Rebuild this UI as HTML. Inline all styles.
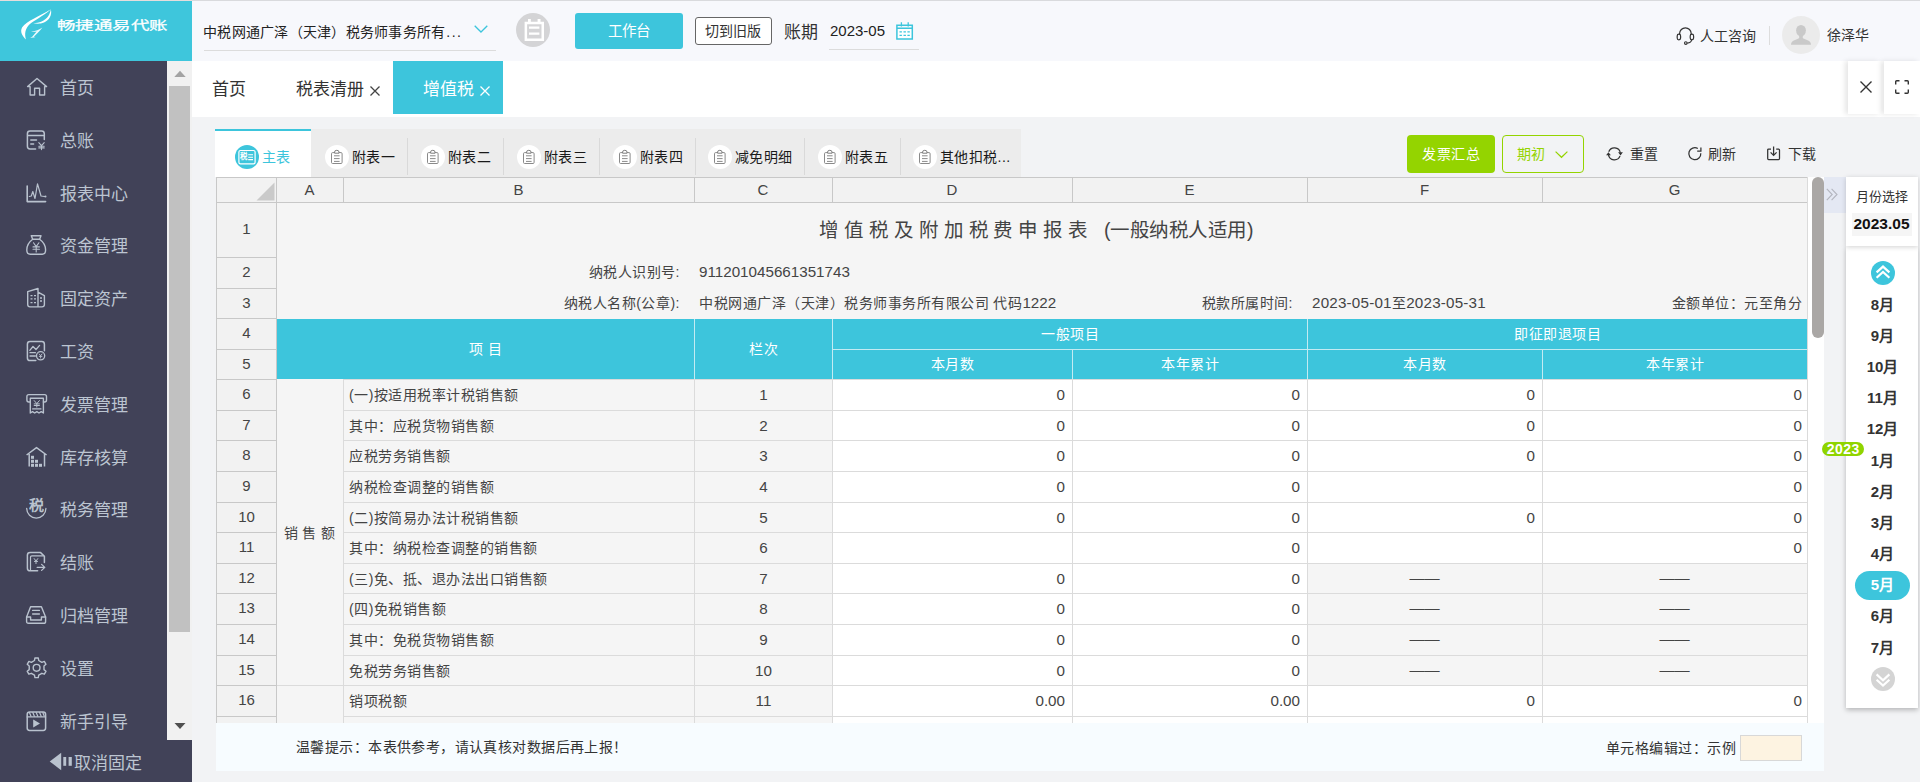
<!DOCTYPE html>
<html lang="zh-CN">
<head>
<meta charset="utf-8">
<title>畅捷通易代账</title>
<style>
*{box-sizing:border-box;margin:0;padding:0}
html,body{width:1920px;height:782px;overflow:hidden}
body{font-family:"Liberation Sans",sans-serif;background:#f2f3f5;color:#333;position:relative;font-size:14px}
.abs{position:absolute}
.t{position:absolute;white-space:nowrap;line-height:20px;height:20px}
svg{position:absolute;overflow:visible}
#hdr{left:0;top:0;width:1920px;height:61px;background:#f7f8fc;border-top:1px solid #d9dadd}
#logo{left:0;top:0;width:192px;height:61px;background:#3ec6dc;border-top:1px solid #e6dddc}
#side{left:0;top:61px;width:167px;height:721px;background:#414258}
#sscroll{left:167px;top:61px;width:25px;height:679px;background:#f1f1f1}
#sthumb{left:169px;top:86px;width:21px;height:546px;background:#c1c1c1}
#sfoot{left:0;top:740px;width:192px;height:42px;background:#414258}
.mi{position:absolute;left:60px;color:#bcc5d1;font-size:17px;line-height:20px;height:20px;white-space:nowrap}
#tabbar{left:192px;top:61px;width:1728px;height:56px;background:#fff}
#tabact{left:393px;top:61px;width:110px;height:53px;background:#3dc5dc}
.ci{top:145px;width:24px;height:24px;border-radius:12px;background:#fff}
.st{top:147px;font-size:14px;letter-spacing:0.4px;color:#1a1a1a}
#grid .c{font-size:14px;letter-spacing:0.5px;color:#444}
#grid .n{font-size:15.2px;letter-spacing:0}
#grid .h{font-size:15px;color:#444;text-align:center}
#grid .r{text-align:right}
#grid .m{text-align:center}
#grid .w{color:#fff}
#grid .s{font-size:14px;letter-spacing:0;word-spacing:0.8px}
#grid .d{letter-spacing:0;margin-top:-1px;transform:scaleX(1.08)}
#grid .ttl{font-size:19.5px;color:#444;line-height:24px;height:24px;word-spacing:-0.5px}
.mo{left:1846px;width:73px;text-align:center;font-size:15px;font-weight:bold;color:#333}
</style>
</head>
<body>
<div id="hdr" class="abs"></div>
<div id="logo" class="abs"></div>
<div class="t" style="left:57px;top:16px;font-size:12px;color:#fff;-webkit-text-stroke:0.25px #fff;transform:scaleX(1.54);transform-origin:0 50%">畅捷通易代账</div>
<div class="t" style="left:203px;top:22px;font-size:14px;letter-spacing:0.25px;color:#222">中税网通广泽（天津）税务师事务所有<span style="letter-spacing:1.5px;margin-left:1px">...</span></div>
<div class="abs" style="left:204px;top:50px;width:292px;height:1px;background:#dcdcdc"></div>
<svg style="left:474px;top:25px" width="14" height="8" viewBox="0 0 14 8"><path d="M0.7 0.7 L7 7 L13.3 0.7" fill="none" stroke="#3dc5dc" stroke-width="1.3"/></svg>
<div class="abs" style="left:516px;top:13px;width:34px;height:34px;border-radius:17px;background:#d4d4d6"></div>
<div class="abs" style="left:575px;top:13px;width:108px;height:36px;border-radius:3px;background:#3dc5dc"></div>
<div class="t" style="left:575px;top:21px;width:108px;text-align:center;font-size:14.5px;color:#fff">工作台</div>
<div class="abs" style="left:695px;top:17px;width:77px;height:28px;border-radius:3px;background:#fff;border:1px solid #666"></div>
<div class="t" style="left:694px;top:21px;width:77px;text-align:center;font-size:14px;color:#333">切到旧版</div>
<div class="t" style="left:784px;top:23px;font-size:17px;color:#333">账期</div>
<div class="t" style="left:830px;top:21px;font-size:15px;color:#222">2023-05</div>
<div class="abs" style="left:829px;top:49px;width:90px;height:1px;background:#dcdcdc"></div>
<div class="t" style="left:1700px;top:26px;font-size:14px;color:#333">人工咨询</div>
<div class="abs" style="left:1769px;top:26px;width:1px;height:19px;background:#ddd"></div>
<div class="abs" style="left:1782px;top:16px;width:38px;height:38px;border-radius:19px;background:#ebebeb"></div>
<div class="t" style="left:1827px;top:25px;font-size:14px;color:#333">徐泽华</div>
<svg style="left:0;top:0" width="60" height="60" viewBox="0 0 60 60">
<path d="M26 39.6 C22.4 36 19.6 31.6 22.2 27.2 C26.6 21 40 16 50.9 9.2 C42.5 16.8 33.6 20.4 29.4 24.4 C25.4 28.4 24.2 33.2 26 39.6 Z" fill="#fff"/>
<path d="M50.9 9.2 C52.2 15 49.2 20.2 44 22.6 C40 24.2 36 23.8 33.2 23.2 C39 22.8 45 20.8 48 16.4 C49.7 14 50.5 11.5 50.9 9.2 Z" fill="#fff"/>
<path d="M42.4 27.6 C39 29.8 36.2 31.4 31 31.6 C33.6 32 35 31.9 36.6 31.6 L32.2 36.8 L30.2 37.7 C32.4 37.8 34.2 37.6 35.6 37 L33.8 36.8 C37 34 39.8 31 42.4 27.6 Z" fill="#fff" opacity="0.92"/>
</svg>
<svg style="left:516px;top:13px" width="34" height="34" viewBox="0 0 34 34"><path d="M8.6 8.8 H12 V6 H14.8 V8.8 H21.6 V6 H24.5 V8.8 H28 V27.9 H8.6 Z M11.1 11.3 V25.4 H25.5 V11.3 Z M13 13.6 H23.4 V15.8 H13 Z M13 19.5 H23.4 V21.7 H13 Z" fill="#fff" fill-rule="evenodd"/></svg>
<svg style="left:896px;top:22px" width="18" height="18" viewBox="0 0 18 18"><rect x="0.9" y="6.4" width="15.4" height="10.4" fill="#fff"/><path d="M0.9 3.2 H16.3 V16.9 H0.9 Z M0.9 6.2 H16.3" fill="none" stroke="#3dc5dc" stroke-width="1.5"/><path d="M5.4 0.2 V4.6 M12.2 0.2 V4.6" stroke="#3dc5dc" stroke-width="1.3" fill="none"/><path d="M3.5 9.8 H5.9 M7.5 9.8 H9.9 M11.4 9.8 H13.8 M3.5 13.4 H5.9 M7.5 13.4 H9.9 M11.4 13.4 H13.8" stroke="#3dc5dc" stroke-width="1.3" fill="none"/></svg>
<svg style="left:1676px;top:26px" width="19" height="20" viewBox="0 0 19 20"><path d="M3.6 8.4 V7.6 A5.8 5.8 0 0 1 15.2 7.6 V8.4" fill="none" stroke="#333" stroke-width="1.2"/><rect x="1.2" y="8.2" width="3.4" height="5.6" rx="1.7" fill="none" stroke="#333" stroke-width="1.2"/><rect x="14.2" y="8.2" width="3.4" height="5.6" rx="1.7" fill="none" stroke="#333" stroke-width="1.2"/><path d="M15.6 13.8 C15.4 16 13.6 17 11.2 17.1" fill="none" stroke="#333" stroke-width="1.2"/><circle cx="9.8" cy="17.1" r="1.3" fill="none" stroke="#333" stroke-width="1.1"/></svg>
<svg style="left:1782px;top:16px" width="38" height="38" viewBox="0 0 38 38"><ellipse cx="19" cy="14.6" rx="4.9" ry="5.7" fill="#c9c9c9"/><path d="M9 28.8 C9 26 10.5 25 13 24 L16.6 22.4 C17.4 22 17.4 21 17 20 H21 C20.6 21 20.6 22 21.4 22.4 L25 24 C27.5 25 29 26 29 28.8 Z" fill="#c9c9c9"/></svg>
<div id="side" class="abs"></div>
<div id="sscroll" class="abs"></div>
<div id="sthumb" class="abs"></div>
<svg style="left:173.5px;top:70px" width="12" height="8" viewBox="0 0 12 8"><path d="M6 0.8 L11.7 7 L0.3 7 Z" fill="#a3a3a3"/></svg>
<svg style="left:174px;top:722px" width="12" height="8" viewBox="0 0 12 8"><path d="M0.5 1 L11.5 1 L6 7 Z" fill="#505050"/></svg>
<div id="sfoot" class="abs"></div>
<div class="mi" style="top:79px">首页</div>
<div class="mi" style="top:132px">总账</div>
<div class="mi" style="top:185px">报表中心</div>
<div class="mi" style="top:237px">资金管理</div>
<div class="mi" style="top:290px">固定资产</div>
<div class="mi" style="top:343px">工资</div>
<div class="mi" style="top:396px">发票管理</div>
<div class="mi" style="top:449px">库存核算</div>
<div class="mi" style="top:501px">税务管理</div>
<div class="mi" style="top:554px">结账</div>
<div class="mi" style="top:607px">归档管理</div>
<div class="mi" style="top:660px">设置</div>
<div class="mi" style="top:713px">新手引导</div>
<div class="t" style="left:74px;top:754px;font-size:17px;color:#bcc5d1">取消固定</div>
<svg style="left:27px;top:77px" width="21" height="19" viewBox="0 0 21 19"><path d="M10 1.5 L19.6 9.6 H17.6 V18 H12.6 V11.2 H7.6 V18 H3.1 V9.6 H0.6 Z" stroke="#b9c2ce" fill="none" stroke-width="1.4" stroke-linecap="round" stroke-linejoin="round"/></svg>
<svg style="left:26px;top:129px" width="20" height="22" viewBox="0 0 20 22"><path d="M9.6 20 H4 Q1.4 20 1.4 17.3 V4.7 Q1.4 2 4 2 H15.6 Q18.3 2 18.3 4.7 V10.6 M1.4 6.4 H18.3" stroke="#b9c2ce" fill="none" stroke-width="1.5" stroke-linecap="round" stroke-linejoin="round"/><path d="M4.8 11 H10.5 M4.8 15 H7.6" stroke="#b9c2ce" fill="none" stroke-width="1.5" stroke-linecap="round" stroke-linejoin="round"/><path d="M12.8 13.6 L15.5 16.6 L18.2 13.6 M15.5 16.6 V20.6 M12.8 17.2 H18.2 M12.8 18.9 H18.2" stroke="#b9c2ce" fill="none" stroke-width="1.1" stroke-linecap="round" stroke-linejoin="round"/></svg>
<svg style="left:26px;top:182px" width="21" height="21" viewBox="0 0 21 21"><path d="M1.2 4 V19.6 H19.6" stroke="#b9c2ce" fill="none" stroke-width="1.6" stroke-linecap="round" stroke-linejoin="round"/><path d="M3.3 14.5 L5.3 14 L6.8 9.5 L9 16.5 L11.5 1.8 L15 14 L18.5 14.5" stroke="#b9c2ce" fill="none" stroke-width="1.2" stroke-linecap="round" stroke-linejoin="round"/><circle cx="19.4" cy="14.5" r="1.1" fill="#b9c2ce"/></svg>
<svg style="left:26px;top:234px" width="21" height="22" viewBox="0 0 21 22"><path d="M5.3 1.7 H15 L13.6 5.3 H6.7 Z" stroke="#b9c2ce" fill="none" stroke-width="1.4" stroke-linecap="round" stroke-linejoin="round"/><path d="M6.7 5.3 C2.2 8.6 0.8 13 0.8 16 C0.8 19 2 20.2 4.2 20.2 H16.2 C18.4 20.2 19.6 19 19.6 16 C19.6 13 18.2 8.6 13.6 5.3" stroke="#b9c2ce" fill="none" stroke-width="1.4" stroke-linecap="round" stroke-linejoin="round"/><path d="M7.5 8.8 L10.2 12.6 L12.9 8.8 M10.2 12.6 V18 M7 12.9 H13.4 M7 15.3 H13.4" stroke="#b9c2ce" fill="none" stroke-width="1.1" stroke-linecap="round" stroke-linejoin="round"/></svg>
<svg style="left:26px;top:287px" width="20" height="21" viewBox="0 0 20 21"><path d="M12 19.9 H4 Q1.7 19.9 1.7 17.6 V4.6 L12 1.5 V19.9 H16 Q18.4 19.9 18.4 17.6 V8.6 L12 5.2" stroke="#b9c2ce" fill="none" stroke-width="1.4" stroke-linecap="round" stroke-linejoin="round"/><path d="M4.5 8.6 H6.5 M8 8.6 H10 M4.5 11.8 H6.5 M8 11.8 H10 M4.5 15.7 H6.5 M8 15.7 H10 M14 11 H16 M14 14 H16" stroke="#b9c2ce" fill="none" stroke-width="1.3" stroke-linecap="butt" stroke-linejoin="round"/></svg>
<svg style="left:26px;top:340px" width="21" height="22" viewBox="0 0 21 22"><path d="M9.8 20.5 H4 Q1.4 20.5 1.4 17.9 V4.2 Q1.4 1.6 4 1.6 H15.8 Q18.4 1.6 18.4 4.2 V10.8" stroke="#b9c2ce" fill="none" stroke-width="1.5" stroke-linecap="round" stroke-linejoin="round"/><path d="M3.8 10.3 L7 6.5 L10 9.5 L13.6 5.4" stroke="#b9c2ce" fill="none" stroke-width="1.3" stroke-linecap="round" stroke-linejoin="round"/><path d="M4 12.7 H9.4 M4 16 H9.4" stroke="#b9c2ce" fill="none" stroke-width="1.3" stroke-linecap="round" stroke-linejoin="round"/><circle cx="14.6" cy="15.8" r="4.1" stroke="#b9c2ce" fill="none" stroke-width="1.3" stroke-linecap="round" stroke-linejoin="round"/><path d="M13.2 14 L14.6 15.7 L16 14 M14.6 15.7 V18 M13.3 16.4 H15.9" stroke="#b9c2ce" fill="none" stroke-width="0.9" stroke-linecap="round" stroke-linejoin="round"/></svg>
<svg style="left:26px;top:393px" width="22" height="22" viewBox="0 0 22 22"><path d="M4.2 9 H2.8 Q0.9 9 0.9 7 V3.6 Q0.9 1.6 2.8 1.6 H18.6 Q20.5 1.6 20.5 3.6 V7 Q20.5 9 18.6 9 H17.4" stroke="#b9c2ce" fill="none" stroke-width="1.4" stroke-linecap="round" stroke-linejoin="round"/><path d="M4.3 5.3 H17.4 V20 L15.2 18.6 L13 20 L10.85 18.6 L8.7 20 L6.5 18.6 L4.3 20 Z" stroke="#b9c2ce" fill="none" stroke-width="1.4" stroke-linecap="round" stroke-linejoin="round"/><path d="M8.2 7.6 L10.8 10.6 L13.4 7.6 M10.8 10.6 V14 M8.2 10.9 H13.4 M8.2 12.5 H13.4" stroke="#b9c2ce" fill="none" stroke-width="1" stroke-linecap="round" stroke-linejoin="round"/><path d="M6.6 15.9 H15" stroke="#b9c2ce" fill="none" stroke-width="1.1" stroke-linecap="round" stroke-linejoin="round"/></svg>
<svg style="left:26px;top:446px" width="22" height="22" viewBox="0 0 22 22"><path d="M0.6 9 L10.5 1.6 L20.6 9 M3.2 8 V20.6 M18.5 8 V20.6" stroke="#b9c2ce" fill="none" stroke-width="1.5" stroke-linecap="butt" stroke-linejoin="round"/><rect x="5" y="9.8" width="3" height="3" fill="#b9c2ce"/><rect x="5" y="13.8" width="3" height="3" fill="#b9c2ce"/><rect x="9" y="13.8" width="3" height="3" fill="#b9c2ce"/><rect x="5" y="17.8" width="3" height="3" fill="#b9c2ce"/><rect x="9" y="17.8" width="3" height="3" fill="#b9c2ce"/><rect x="13" y="17.8" width="3" height="3" fill="#b9c2ce"/></svg>
<svg style="left:26px;top:498px" width="21" height="22" viewBox="0 0 21 22"><path d="M0.7 10.5 A9.6 9.6 0 0 0 19.9 10.5" stroke="#b9c2ce" fill="none" stroke-width="1.3" stroke-linecap="round" stroke-linejoin="round"/></svg>
<svg style="left:26px;top:551px" width="21" height="22" viewBox="0 0 21 22"><path d="M11.6 19.8 H4.2 Q1.4 19.8 1.4 17.2 V4.2 Q1.4 1.6 4.2 1.6 H14.6 L18.4 5.2 V11.4" stroke="#b9c2ce" fill="none" stroke-width="1.5" stroke-linecap="round" stroke-linejoin="round"/><path d="M4.5 18.6 V6.2 Q4.5 4.8 5.9 4.8 H17.6" stroke="#b9c2ce" fill="none" stroke-width="1.2" stroke-linecap="round" stroke-linejoin="round"/><path d="M11.2 16.4 H18.4 M15.6 13.4 L18.8 16.4 L15.6 19.4" stroke="#b9c2ce" fill="none" stroke-width="1.3" stroke-linecap="round" stroke-linejoin="round"/><path d="M8.2 7.6 L10 10 L11.8 7.6 M10 10 V12.6 M8.4 10.4 H11.6" stroke="#b9c2ce" fill="none" stroke-width="1" stroke-linecap="round" stroke-linejoin="round"/></svg>
<svg style="left:26px;top:605px" width="21" height="20" viewBox="0 0 21 20"><path d="M4.6 1.8 H15.4 L19.6 12 V16.4 Q19.6 18.3 17.7 18.3 H2.5 Q0.6 18.3 0.6 16.4 V12 Z" stroke="#b9c2ce" fill="none" stroke-width="1.4" stroke-linecap="round" stroke-linejoin="round"/><path d="M0.6 12 H4.6 V15 H15.4 V12 H19.6" stroke="#b9c2ce" fill="none" stroke-width="1.4" stroke-linecap="round" stroke-linejoin="round"/><path d="M6.6 5.4 H13.4 M6.6 9 H13.4" stroke="#b9c2ce" fill="none" stroke-width="1.3" stroke-linecap="round" stroke-linejoin="round"/></svg>
<svg style="left:26px;top:657px" width="22" height="22" viewBox="0 0 22 22"><path d="M8.48 3.50 L8.93 0.94 L12.27 0.94 L12.72 3.50 L15.86 5.31 L18.31 4.43 L19.97 7.31 L17.98 8.99 L17.98 12.61 L19.97 14.29 L18.31 17.17 L15.86 16.29 L12.72 18.10 L12.27 20.66 L8.93 20.66 L8.48 18.10 L5.34 16.29 L2.89 17.17 L1.23 14.29 L3.22 12.61 L3.22 8.99 L1.23 7.31 L2.89 4.43 L5.34 5.31 Z" stroke="#b9c2ce" fill="none" stroke-width="1.4" stroke-linecap="round" stroke-linejoin="round"/><circle cx="10.6" cy="10.8" r="3.4" stroke="#b9c2ce" fill="none" stroke-width="1.4" stroke-linecap="round" stroke-linejoin="round"/></svg>
<svg style="left:26px;top:710px" width="21" height="22" viewBox="0 0 21 22"><rect x="1.2" y="1.9" width="18.4" height="18.6" rx="2.4" stroke="#b9c2ce" fill="none" stroke-width="1.5" stroke-linecap="round" stroke-linejoin="round"/><path d="M1.2 6.9 H19.6" stroke="#b9c2ce" fill="none" stroke-width="1.3" stroke-linecap="round" stroke-linejoin="round"/><path d="M3.4 2.6 L5 6.2 M6.8 2.6 L8.4 6.2 M10.2 2.6 L11.8 6.2 M13.6 2.6 L15.2 6.2 M16.8 2.6 L18.2 6" stroke="#b9c2ce" fill="none" stroke-width="1.2" stroke-linecap="round" stroke-linejoin="round"/><path d="M7.2 9.6 V17.6 L14 13.6 Z" fill="#b9c2ce"/></svg>
<div class="t" style="left:28px;top:495px;font-size:15px;font-weight:bold;color:#b9c2ce;width:17px;text-align:center;transform:scaleY(0.92)">税</div>
<svg style="left:49px;top:752px" width="24" height="19" viewBox="0 0 24 19"><path d="M0.7 9.4 L12.2 0.8 V18.3 Z" fill="#b9c2ce"/><rect x="14.3" y="5" width="2.9" height="8.8" fill="#b9c2ce"/><rect x="19.6" y="5" width="3.2" height="8.8" fill="#b9c2ce"/></svg>
<div id="tabbar" class="abs"></div>
<div id="tabact" class="abs"></div>
<div class="t" style="left:212px;top:80px;font-size:17px;color:#333">首页</div>
<div class="t" style="left:296px;top:80px;font-size:17px;color:#333">税表清册</div>
<svg style="left:370px;top:86px" width="10" height="10" viewBox="0 0 10 10"><path d="M0.5 0.5 L9.5 9.5 M9.5 0.5 L0.5 9.5" stroke="#444" stroke-width="1.3" fill="none"/></svg>
<div class="t" style="left:423px;top:80px;font-size:17px;color:#fff">增值税</div>
<svg style="left:480px;top:86px" width="10" height="10" viewBox="0 0 10 10"><path d="M0.5 0.5 L9.5 9.5 M9.5 0.5 L0.5 9.5" stroke="#fff" stroke-width="1.3" fill="none"/></svg>
<div class="abs" style="left:1848px;top:61px;width:33px;height:53px;background:#fff;box-shadow:-3px 0 5px rgba(0,0,0,0.10)"></div>
<div class="abs" style="left:1884px;top:61px;width:36px;height:53px;background:#fff;box-shadow:-3px 0 5px rgba(0,0,0,0.10)"></div>
<svg style="left:1860px;top:81px" width="12" height="12" viewBox="0 0 12 12"><path d="M0.5 0.5 L11.5 11.5 M11.5 0.5 L0.5 11.5" stroke="#333" stroke-width="1.4" fill="none"/></svg>
<svg style="left:1895px;top:80px" width="14" height="14" viewBox="0 0 14 14"><path d="M0.7 4.5 V1.7 Q0.7 0.7 1.7 0.7 H4.5 M9.5 0.7 H12.3 Q13.3 0.7 13.3 1.7 V4.5 M13.3 9.5 V12.3 Q13.3 13.3 12.3 13.3 H9.5 M4.5 13.3 H1.7 Q0.7 13.3 0.7 12.3 V9.5" stroke="#333" stroke-width="1.4" fill="none"/></svg>
<div class="abs" style="left:311px;top:129px;width:710px;height:48px;background:#ececec"></div>
<div class="abs" style="left:215px;top:129px;width:96px;height:48px;background:#fff;border-top:2px solid #3dc5dc"></div>
<div class="abs" style="left:235px;top:145px;width:24px;height:24px;border-radius:12px;background:#3dc5dc"></div>
<div class="t" style="left:262px;top:147px;font-size:14px;letter-spacing:0.4px;color:#3dc5dc">主表</div>
<div class="abs" style="left:407px;top:138px;width:1px;height:37px;background:#d9d9d9"></div>
<div class="abs" style="left:503px;top:138px;width:1px;height:37px;background:#d9d9d9"></div>
<div class="abs" style="left:599px;top:138px;width:1px;height:37px;background:#d9d9d9"></div>
<div class="abs" style="left:695px;top:138px;width:1px;height:37px;background:#d9d9d9"></div>
<div class="abs" style="left:804px;top:138px;width:1px;height:37px;background:#d9d9d9"></div>
<div class="abs" style="left:900px;top:138px;width:1px;height:37px;background:#d9d9d9"></div>
<div class="abs ci" style="left:325px"></div><div class="t st" style="left:352px">附表一</div>
<div class="abs ci" style="left:421px"></div><div class="t st" style="left:448px">附表二</div>
<div class="abs ci" style="left:517px"></div><div class="t st" style="left:544px">附表三</div>
<div class="abs ci" style="left:613px"></div><div class="t st" style="left:640px">附表四</div>
<div class="abs ci" style="left:708px"></div><div class="t st" style="left:735px">减免明细</div>
<div class="abs ci" style="left:818px"></div><div class="t st" style="left:845px">附表五</div>
<div class="abs ci" style="left:913px"></div><div class="t st" style="left:940px">其他扣税...</div>
<div class="abs" style="left:1407px;top:135px;width:88px;height:38px;border-radius:4px;background:#94d400"></div>
<div class="t" style="left:1407px;top:144px;width:88px;text-align:center;font-size:14px;letter-spacing:0.5px;text-indent:0.5px;color:#fff">发票汇总</div>
<div class="abs" style="left:1502px;top:135px;width:82px;height:38px;border-radius:4px;border:1px solid #94d400"></div>
<div class="t" style="left:1517px;top:144px;font-size:14px;color:#94d400">期初</div>
<svg style="left:1555px;top:151px" width="13" height="7" viewBox="0 0 13 7"><path d="M0.6 0.6 L6.5 6.3 L12.4 0.6" fill="none" stroke="#94d400" stroke-width="1.2"/></svg>
<div class="t" style="left:1630px;top:144px;font-size:14px;color:#333">重置</div>
<div class="t" style="left:1708px;top:144px;font-size:14px;color:#333">刷新</div>
<div class="t" style="left:1788px;top:144px;font-size:14px;color:#333">下载</div>
<svg style="left:235px;top:145px" width="24" height="24" viewBox="0 0 24 24"><rect x="3.9" y="5.5" width="16.2" height="13.4" rx="1.6" fill="none" stroke="#fff" stroke-width="1.2"/><path d="M13.2 9.8 H18 M13.2 12.2 H18 M13.2 14.6 H18" stroke="#fff" stroke-width="1.1" fill="none"/></svg>
<div class="t" style="left:239px;top:147px;width:9px;height:20px;font-size:7.5px;font-weight:bold;color:#fff;text-align:center">税</div>
<svg style="left:330px;top:149px" width="14" height="16" viewBox="0 0 14 16"><path d="M4.6 3.6 H2.6 Q1.5 3.6 1.5 4.7 V13.4 Q1.5 14.5 2.6 14.5 H11 Q12.1 14.5 12.1 13.4 V4.7 Q12.1 3.6 11 3.6 H9" fill="none" stroke="#8a8a8a" stroke-width="1"/><path d="M4.6 4.2 V3 Q4.6 1.3 6.8 1.3 Q9 1.3 9 3 V4.2 Z" fill="none" stroke="#7d7d7d" stroke-width="1"/><path d="M4 6.8 H9.6 M4 9.6 H9.6 M4 12.4 H9.6" stroke="#8a8a8a" stroke-width="1" fill="none"/></svg>
<svg style="left:426px;top:149px" width="14" height="16" viewBox="0 0 14 16"><path d="M4.6 3.6 H2.6 Q1.5 3.6 1.5 4.7 V13.4 Q1.5 14.5 2.6 14.5 H11 Q12.1 14.5 12.1 13.4 V4.7 Q12.1 3.6 11 3.6 H9" fill="none" stroke="#8a8a8a" stroke-width="1"/><path d="M4.6 4.2 V3 Q4.6 1.3 6.8 1.3 Q9 1.3 9 3 V4.2 Z" fill="none" stroke="#7d7d7d" stroke-width="1"/><path d="M4 6.8 H9.6 M4 9.6 H9.6 M4 12.4 H9.6" stroke="#8a8a8a" stroke-width="1" fill="none"/></svg>
<svg style="left:522px;top:149px" width="14" height="16" viewBox="0 0 14 16"><path d="M4.6 3.6 H2.6 Q1.5 3.6 1.5 4.7 V13.4 Q1.5 14.5 2.6 14.5 H11 Q12.1 14.5 12.1 13.4 V4.7 Q12.1 3.6 11 3.6 H9" fill="none" stroke="#8a8a8a" stroke-width="1"/><path d="M4.6 4.2 V3 Q4.6 1.3 6.8 1.3 Q9 1.3 9 3 V4.2 Z" fill="none" stroke="#7d7d7d" stroke-width="1"/><path d="M4 6.8 H9.6 M4 9.6 H9.6 M4 12.4 H9.6" stroke="#8a8a8a" stroke-width="1" fill="none"/></svg>
<svg style="left:618px;top:149px" width="14" height="16" viewBox="0 0 14 16"><path d="M4.6 3.6 H2.6 Q1.5 3.6 1.5 4.7 V13.4 Q1.5 14.5 2.6 14.5 H11 Q12.1 14.5 12.1 13.4 V4.7 Q12.1 3.6 11 3.6 H9" fill="none" stroke="#8a8a8a" stroke-width="1"/><path d="M4.6 4.2 V3 Q4.6 1.3 6.8 1.3 Q9 1.3 9 3 V4.2 Z" fill="none" stroke="#7d7d7d" stroke-width="1"/><path d="M4 6.8 H9.6 M4 9.6 H9.6 M4 12.4 H9.6" stroke="#8a8a8a" stroke-width="1" fill="none"/></svg>
<svg style="left:713px;top:149px" width="14" height="16" viewBox="0 0 14 16"><path d="M4.6 3.6 H2.6 Q1.5 3.6 1.5 4.7 V13.4 Q1.5 14.5 2.6 14.5 H11 Q12.1 14.5 12.1 13.4 V4.7 Q12.1 3.6 11 3.6 H9" fill="none" stroke="#8a8a8a" stroke-width="1"/><path d="M4.6 4.2 V3 Q4.6 1.3 6.8 1.3 Q9 1.3 9 3 V4.2 Z" fill="none" stroke="#7d7d7d" stroke-width="1"/><path d="M4 6.8 H9.6 M4 9.6 H9.6 M4 12.4 H9.6" stroke="#8a8a8a" stroke-width="1" fill="none"/></svg>
<svg style="left:823px;top:149px" width="14" height="16" viewBox="0 0 14 16"><path d="M4.6 3.6 H2.6 Q1.5 3.6 1.5 4.7 V13.4 Q1.5 14.5 2.6 14.5 H11 Q12.1 14.5 12.1 13.4 V4.7 Q12.1 3.6 11 3.6 H9" fill="none" stroke="#8a8a8a" stroke-width="1"/><path d="M4.6 4.2 V3 Q4.6 1.3 6.8 1.3 Q9 1.3 9 3 V4.2 Z" fill="none" stroke="#7d7d7d" stroke-width="1"/><path d="M4 6.8 H9.6 M4 9.6 H9.6 M4 12.4 H9.6" stroke="#8a8a8a" stroke-width="1" fill="none"/></svg>
<svg style="left:918px;top:149px" width="14" height="16" viewBox="0 0 14 16"><path d="M4.6 3.6 H2.6 Q1.5 3.6 1.5 4.7 V13.4 Q1.5 14.5 2.6 14.5 H11 Q12.1 14.5 12.1 13.4 V4.7 Q12.1 3.6 11 3.6 H9" fill="none" stroke="#8a8a8a" stroke-width="1"/><path d="M4.6 4.2 V3 Q4.6 1.3 6.8 1.3 Q9 1.3 9 3 V4.2 Z" fill="none" stroke="#7d7d7d" stroke-width="1"/><path d="M4 6.8 H9.6 M4 9.6 H9.6 M4 12.4 H9.6" stroke="#8a8a8a" stroke-width="1" fill="none"/></svg>
<svg style="left:1605px;top:145px" width="19" height="18" viewBox="0 0 19 18"><path d="M3.76 6.75 A6 6 0 0 1 15.31 7.76 M15.04 10.85 A6 6 0 0 1 3.49 9.84" fill="none" stroke="#333" stroke-width="1.25"/><path d="M13.1 7.3 L17.9 7.3 L15.5 10.4 Z M1.1 10.3 L5.9 10.3 L3.4 7.2 Z" fill="#333"/></svg>
<svg style="left:1687px;top:146px" width="16" height="16" viewBox="0 0 16 16"><path d="M13.78 7.18 A6 6 0 1 1 10.8 2.5" fill="none" stroke="#333" stroke-width="1.25"/><path d="M13.9 1.4 V5.2 H10.2" fill="none" stroke="#333" stroke-width="1.25"/></svg>
<svg style="left:1767px;top:146px" width="14" height="15" viewBox="0 0 14 15"><path d="M4 3 H1.6 Q0.7 3 0.7 3.9 V12.6 Q0.7 13.5 1.6 13.5 H11.6 Q12.5 13.5 12.5 12.6 V3.9 Q12.5 3 11.6 3 H9.2" fill="none" stroke="#333" stroke-width="1.25"/><path d="M6.6 0.4 V9.2 M3.6 6.4 L6.6 9.4 L9.6 6.4" fill="none" stroke="#333" stroke-width="1.25"/></svg>
<div class="abs" id="grid" style="left:216px;top:177px;width:1596px;height:546px;overflow:hidden;background:#f5f5f5">
<div class="abs" style="left:0px;top:0px;width:1591px;height:26px;background:#f2f2f2"></div>
<div class="abs" style="left:0px;top:0px;width:61px;height:546px;background:#f2f2f2"></div>
<div class="abs" style="left:1592px;top:0px;width:4px;height:546px;background:#fff"></div>
<div class="abs" style="left:617px;top:203px;width:974px;height:183px;background:#fff"></div>
<div class="abs" style="left:617px;top:386px;width:474px;height:122px;background:#fff"></div>
<div class="abs" style="left:617px;top:509px;width:974px;height:60px;background:#fff"></div>
<div class="abs" style="left:61px;top:142px;width:1530px;height:60px;background:#3dc5dc"></div>
<div class="abs" style="left:0px;top:0px;width:1592px;height:1px;background:#c8c8c8"></div>
<div class="abs" style="left:0px;top:25px;width:1592px;height:1px;background:#c8c8c8"></div>
<div class="abs" style="left:0px;top:80px;width:61px;height:1px;background:#c8c8c8"></div>
<div class="abs" style="left:0px;top:111px;width:61px;height:1px;background:#c8c8c8"></div>
<div class="abs" style="left:0px;top:141px;width:61px;height:1px;background:#c8c8c8"></div>
<div class="abs" style="left:0px;top:172px;width:61px;height:1px;background:#c8c8c8"></div>
<div class="abs" style="left:0px;top:202px;width:61px;height:1px;background:#c8c8c8"></div>
<div class="abs" style="left:0px;top:233px;width:61px;height:1px;background:#c8c8c8"></div>
<div class="abs" style="left:0px;top:263px;width:61px;height:1px;background:#c8c8c8"></div>
<div class="abs" style="left:0px;top:294px;width:61px;height:1px;background:#c8c8c8"></div>
<div class="abs" style="left:0px;top:325px;width:61px;height:1px;background:#c8c8c8"></div>
<div class="abs" style="left:0px;top:355px;width:61px;height:1px;background:#c8c8c8"></div>
<div class="abs" style="left:0px;top:386px;width:61px;height:1px;background:#c8c8c8"></div>
<div class="abs" style="left:0px;top:416px;width:61px;height:1px;background:#c8c8c8"></div>
<div class="abs" style="left:0px;top:447px;width:61px;height:1px;background:#c8c8c8"></div>
<div class="abs" style="left:0px;top:478px;width:61px;height:1px;background:#c8c8c8"></div>
<div class="abs" style="left:0px;top:508px;width:61px;height:1px;background:#c8c8c8"></div>
<div class="abs" style="left:0px;top:539px;width:61px;height:1px;background:#c8c8c8"></div>
<div class="abs" style="left:0px;top:570px;width:61px;height:1px;background:#c8c8c8"></div>
<div class="abs" style="left:128px;top:202px;width:1463px;height:1px;background:#dbdbdb"></div>
<div class="abs" style="left:128px;top:233px;width:1463px;height:1px;background:#dbdbdb"></div>
<div class="abs" style="left:128px;top:263px;width:1463px;height:1px;background:#dbdbdb"></div>
<div class="abs" style="left:128px;top:294px;width:1463px;height:1px;background:#dbdbdb"></div>
<div class="abs" style="left:128px;top:325px;width:1463px;height:1px;background:#dbdbdb"></div>
<div class="abs" style="left:128px;top:355px;width:1463px;height:1px;background:#dbdbdb"></div>
<div class="abs" style="left:128px;top:386px;width:1463px;height:1px;background:#dbdbdb"></div>
<div class="abs" style="left:128px;top:416px;width:1463px;height:1px;background:#dbdbdb"></div>
<div class="abs" style="left:128px;top:447px;width:1463px;height:1px;background:#dbdbdb"></div>
<div class="abs" style="left:128px;top:478px;width:1463px;height:1px;background:#dbdbdb"></div>
<div class="abs" style="left:128px;top:508px;width:1463px;height:1px;background:#dbdbdb"></div>
<div class="abs" style="left:128px;top:539px;width:1463px;height:1px;background:#dbdbdb"></div>
<div class="abs" style="left:128px;top:570px;width:1463px;height:1px;background:#dbdbdb"></div>
<div class="abs" style="left:61px;top:508px;width:67px;height:1px;background:#dbdbdb"></div>
<div class="abs" style="left:0px;top:0px;width:1px;height:546px;background:#c8c8c8"></div>
<div class="abs" style="left:60px;top:0px;width:1px;height:546px;background:#c8c8c8"></div>
<div class="abs" style="left:127px;top:0px;width:1px;height:25px;background:#c8c8c8"></div>
<div class="abs" style="left:478px;top:0px;width:1px;height:25px;background:#c8c8c8"></div>
<div class="abs" style="left:616px;top:0px;width:1px;height:25px;background:#c8c8c8"></div>
<div class="abs" style="left:856px;top:0px;width:1px;height:25px;background:#c8c8c8"></div>
<div class="abs" style="left:1091px;top:0px;width:1px;height:25px;background:#c8c8c8"></div>
<div class="abs" style="left:1326px;top:0px;width:1px;height:25px;background:#c8c8c8"></div>
<div class="abs" style="left:1591px;top:0px;width:1px;height:25px;background:#c8c8c8"></div>
<div class="abs" style="left:127px;top:202px;width:1px;height:344px;background:#dbdbdb"></div>
<div class="abs" style="left:478px;top:202px;width:1px;height:344px;background:#dbdbdb"></div>
<div class="abs" style="left:616px;top:202px;width:1px;height:344px;background:#dbdbdb"></div>
<div class="abs" style="left:856px;top:202px;width:1px;height:344px;background:#dbdbdb"></div>
<div class="abs" style="left:1091px;top:202px;width:1px;height:344px;background:#dbdbdb"></div>
<div class="abs" style="left:1326px;top:202px;width:1px;height:344px;background:#dbdbdb"></div>
<div class="abs" style="left:1591px;top:0px;width:1px;height:546px;background:#dbdbdb"></div>
<div class="abs" style="left:616px;top:172px;width:975px;height:1px;background:#c3ebf2"></div>
<div class="abs" style="left:478px;top:142px;width:1px;height:60px;background:#c3ebf2"></div>
<div class="abs" style="left:616px;top:142px;width:1px;height:60px;background:#c3ebf2"></div>
<div class="abs" style="left:1091px;top:142px;width:1px;height:60px;background:#c3ebf2"></div>
<div class="abs" style="left:856px;top:172px;width:1px;height:30px;background:#c3ebf2"></div>
<div class="abs" style="left:1326px;top:172px;width:1px;height:30px;background:#c3ebf2"></div>
<svg style="left:40px;top:5px" width="19" height="19" viewBox="0 0 19 19"><path d="M18.5 0.5 V18.5 H0.5 Z" fill="#cacaca"/></svg>
<div class="t h" style="left:60px;top:3px;width:67px">A</div>
<div class="t h" style="left:127px;top:3px;width:351px">B</div>
<div class="t h" style="left:478px;top:3px;width:138px">C</div>
<div class="t h" style="left:616px;top:3px;width:240px">D</div>
<div class="t h" style="left:856px;top:3px;width:235px">E</div>
<div class="t h" style="left:1091px;top:3px;width:235px">F</div>
<div class="t h" style="left:1326px;top:3px;width:265px">G</div>
<div class="t h" style="left:0px;top:42.0px;width:61px">1</div>
<div class="t h" style="left:0px;top:85.0px;width:61px">2</div>
<div class="t h" style="left:0px;top:115.5px;width:61px">3</div>
<div class="t h" style="left:0px;top:146.0px;width:61px">4</div>
<div class="t h" style="left:0px;top:176.5px;width:61px">5</div>
<div class="t h" style="left:0px;top:207.0px;width:61px">6</div>
<div class="t h" style="left:0px;top:237.5px;width:61px">7</div>
<div class="t h" style="left:0px;top:268.0px;width:61px">8</div>
<div class="t h" style="left:0px;top:299.0px;width:61px">9</div>
<div class="t h" style="left:0px;top:329.5px;width:61px">10</div>
<div class="t h" style="left:0px;top:360.0px;width:61px">11</div>
<div class="t h" style="left:0px;top:390.5px;width:61px">12</div>
<div class="t h" style="left:0px;top:421.0px;width:61px">13</div>
<div class="t h" style="left:0px;top:452.0px;width:61px">14</div>
<div class="t h" style="left:0px;top:482.5px;width:61px">15</div>
<div class="t h" style="left:0px;top:513.0px;width:61px">16</div>
<div class="t ttl" style="left:603px;top:41px">增 值 税 及 附 加 税 费 申 报 表 <span style="letter-spacing:-0.45px;margin-left:11px">(一般纳税人适用)</span></div>
<div class="t c r" style="left:128px;top:85px;width:336px">纳税人识别号:</div>
<div class="t c n" style="left:483px;top:85px;width:400px">911201045661351743</div>
<div class="t c r" style="left:128px;top:116px;width:336px">纳税人名称(公章):</div>
<div class="t c" style="left:483px;top:116px;width:500px">中税网通广泽（天津）税务师事务所有限公司 代码<span class="n">1222</span></div>
<div class="t c r" style="left:857px;top:116px;width:220px">税款所属时间:</div>
<div class="t c" style="left:1096px;top:116px;width:300px"><span class="n" style="letter-spacing:0.2px">2023-05-01</span>至<span class="n" style="letter-spacing:0.2px">2023-05-31</span></div>
<div class="t c r" style="left:1327px;top:116px;width:259px">金额单位：元至角分</div>
<div class="t c w m" style="left:61px;top:162px;width:417px">项 目</div>
<div class="t c w m" style="left:479px;top:162px;width:137px">栏次</div>
<div class="t c w m" style="left:617px;top:147px;width:474px">一般项目</div>
<div class="t c w m" style="left:1092px;top:147px;width:499px">即征即退项目</div>
<div class="t c w m" style="left:617px;top:177px;width:239px">本月数</div>
<div class="t c w m" style="left:857px;top:177px;width:234px">本年累计</div>
<div class="t c w m" style="left:1092px;top:177px;width:234px">本月数</div>
<div class="t c w m" style="left:1327px;top:177px;width:264px">本年累计</div>
<div class="t c m s" style="left:60px;top:346px;width:67px">销 售 额</div>
<div class="t c" style="left:133px;top:208.0px;width:340px">(一)按适用税率计税销售额</div>
<div class="t c m n" style="left:479px;top:208.0px;width:137px">1</div>
<div class="t c r n" style="left:616px;top:208.0px;width:233px">0</div>
<div class="t c r n" style="left:856px;top:208.0px;width:228px">0</div>
<div class="t c r n" style="left:1091px;top:208.0px;width:228px">0</div>
<div class="t c r n" style="left:1326px;top:208.0px;width:260px">0</div>
<div class="t c" style="left:133px;top:238.5px;width:340px">其中：应税货物销售额</div>
<div class="t c m n" style="left:479px;top:238.5px;width:137px">2</div>
<div class="t c r n" style="left:616px;top:238.5px;width:233px">0</div>
<div class="t c r n" style="left:856px;top:238.5px;width:228px">0</div>
<div class="t c r n" style="left:1091px;top:238.5px;width:228px">0</div>
<div class="t c r n" style="left:1326px;top:238.5px;width:260px">0</div>
<div class="t c" style="left:133px;top:269.0px;width:340px">应税劳务销售额</div>
<div class="t c m n" style="left:479px;top:269.0px;width:137px">3</div>
<div class="t c r n" style="left:616px;top:269.0px;width:233px">0</div>
<div class="t c r n" style="left:856px;top:269.0px;width:228px">0</div>
<div class="t c r n" style="left:1091px;top:269.0px;width:228px">0</div>
<div class="t c r n" style="left:1326px;top:269.0px;width:260px">0</div>
<div class="t c" style="left:133px;top:300.0px;width:340px">纳税检查调整的销售额</div>
<div class="t c m n" style="left:479px;top:300.0px;width:137px">4</div>
<div class="t c r n" style="left:616px;top:300.0px;width:233px">0</div>
<div class="t c r n" style="left:856px;top:300.0px;width:228px">0</div>
<div class="t c r n" style="left:1326px;top:300.0px;width:260px">0</div>
<div class="t c" style="left:133px;top:330.5px;width:340px">(二)按简易办法计税销售额</div>
<div class="t c m n" style="left:479px;top:330.5px;width:137px">5</div>
<div class="t c r n" style="left:616px;top:330.5px;width:233px">0</div>
<div class="t c r n" style="left:856px;top:330.5px;width:228px">0</div>
<div class="t c r n" style="left:1091px;top:330.5px;width:228px">0</div>
<div class="t c r n" style="left:1326px;top:330.5px;width:260px">0</div>
<div class="t c" style="left:133px;top:361.0px;width:340px">其中：纳税检查调整的销售额</div>
<div class="t c m n" style="left:479px;top:361.0px;width:137px">6</div>
<div class="t c r n" style="left:856px;top:361.0px;width:228px">0</div>
<div class="t c r n" style="left:1326px;top:361.0px;width:260px">0</div>
<div class="t c" style="left:133px;top:391.5px;width:340px">(三)免、抵、退办法出口销售额</div>
<div class="t c m n" style="left:479px;top:391.5px;width:137px">7</div>
<div class="t c r n" style="left:616px;top:391.5px;width:233px">0</div>
<div class="t c r n" style="left:856px;top:391.5px;width:228px">0</div>
<div class="t c m d" style="left:1091px;top:391.5px;width:235px">——</div>
<div class="t c m d" style="left:1326px;top:391.5px;width:265px">——</div>
<div class="t c" style="left:133px;top:422.0px;width:340px">(四)免税销售额</div>
<div class="t c m n" style="left:479px;top:422.0px;width:137px">8</div>
<div class="t c r n" style="left:616px;top:422.0px;width:233px">0</div>
<div class="t c r n" style="left:856px;top:422.0px;width:228px">0</div>
<div class="t c m d" style="left:1091px;top:422.0px;width:235px">——</div>
<div class="t c m d" style="left:1326px;top:422.0px;width:265px">——</div>
<div class="t c" style="left:133px;top:453.0px;width:340px">其中：免税货物销售额</div>
<div class="t c m n" style="left:479px;top:453.0px;width:137px">9</div>
<div class="t c r n" style="left:616px;top:453.0px;width:233px">0</div>
<div class="t c r n" style="left:856px;top:453.0px;width:228px">0</div>
<div class="t c m d" style="left:1091px;top:453.0px;width:235px">——</div>
<div class="t c m d" style="left:1326px;top:453.0px;width:265px">——</div>
<div class="t c" style="left:133px;top:483.5px;width:340px">免税劳务销售额</div>
<div class="t c m n" style="left:479px;top:483.5px;width:137px">10</div>
<div class="t c r n" style="left:616px;top:483.5px;width:233px">0</div>
<div class="t c r n" style="left:856px;top:483.5px;width:228px">0</div>
<div class="t c m d" style="left:1091px;top:483.5px;width:235px">——</div>
<div class="t c m d" style="left:1326px;top:483.5px;width:265px">——</div>
<div class="t c" style="left:133px;top:514.0px;width:340px">销项税额</div>
<div class="t c m n" style="left:479px;top:514.0px;width:137px">11</div>
<div class="t c r n" style="left:616px;top:514.0px;width:233px">0.00</div>
<div class="t c r n" style="left:856px;top:514.0px;width:228px">0.00</div>
<div class="t c r n" style="left:1091px;top:514.0px;width:228px">0</div>
<div class="t c r n" style="left:1326px;top:514.0px;width:260px">0</div>
</div>
<div class="abs" style="left:1808px;top:177px;width:16px;height:546px;background:#fff"></div>
<div class="abs" style="left:1812px;top:177px;width:12px;height:161px;border-radius:6px;background:#aaa7a5"></div>
<div class="abs" style="left:1824px;top:177px;width:22px;height:36px;background:#e4e8f3"></div>
<div class="abs" style="left:1846px;top:246px;width:72px;height:462px;background:#fff;box-shadow:0 2px 5px rgba(0,0,0,0.26)"></div>
<div class="abs" style="left:1846px;top:177px;width:72px;height:69px;background:#fff;box-shadow:0 1px 5px rgba(0,0,0,0.18)"></div>
<div class="t" style="left:1846px;top:187px;width:71px;text-align:center;font-size:13px;color:#333">月份选择</div>
<div class="abs" style="left:1852px;top:213px;width:60px;height:23px;background:#f5f5f5"></div>
<div class="t" style="left:1846px;top:214px;width:71px;text-align:center;font-size:15.5px;font-weight:bold;color:#111">2023.05</div>
<div class="abs" style="left:1871px;top:261px;width:24px;height:24px;border-radius:12px;background:#3dc5dc"></div>
<div class="abs" style="left:1855px;top:571px;width:55px;height:29px;border-radius:15px;background:#3dc5dc"></div>
<div class="t mo" style="top:295px">8月</div>
<div class="t mo" style="top:326px">9月</div>
<div class="t mo" style="top:357px">10月</div>
<div class="t mo" style="top:388px">11月</div>
<div class="t mo" style="top:419px">12月</div>
<div class="t mo" style="top:451px">1月</div>
<div class="t mo" style="top:482px">2月</div>
<div class="t mo" style="top:513px">3月</div>
<div class="t mo" style="top:544px">4月</div>
<div class="t mo" style="top:575px;color:#fff">5月</div>
<div class="t mo" style="top:606px">6月</div>
<div class="t mo" style="top:638px">7月</div>
<div class="abs" style="left:1871px;top:667px;width:24px;height:24px;border-radius:12px;background:#d4d4d4"></div>
<div class="abs" style="left:1822px;top:442px;width:42px;height:14px;border-radius:7px;background:#8fd400"></div>
<div class="t" style="left:1822px;top:439px;width:42px;text-align:center;font-size:14px;letter-spacing:0.5px;text-indent:0.5px;font-weight:bold;color:#fff">2023</div>
<svg style="left:1826px;top:188px" width="13" height="13" viewBox="0 0 13 13"><path d="M0.8 0.8 L6.2 6.5 L0.8 12.2 M5.6 0.8 L11 6.5 L5.6 12.2" fill="none" stroke="#b3b5be" stroke-width="1.1"/></svg>
<svg style="left:1871px;top:261px" width="24" height="24" viewBox="0 0 24 24"><path d="M5.6 11.4 L12 5.6 L18.4 11.4 M5.6 16.8 L12 11 L18.4 16.8" fill="none" stroke="#fff" stroke-width="2.2"/></svg>
<svg style="left:1871px;top:667px" width="24" height="24" viewBox="0 0 24 24"><path d="M5.6 7.4 L12 13.2 L18.4 7.4 M5.6 12.8 L12 18.6 L18.4 12.8" fill="none" stroke="#fff" stroke-width="2.2"/></svg>
<div class="abs" style="left:216px;top:723px;width:1608px;height:48px;background:#f7fcff"></div>
<div class="t" style="left:296px;top:737px;font-size:14px;letter-spacing:0.42px;color:#333">温馨提示：本表供参考，请认真核对数据后再上报！</div>
<div class="t" style="left:1606px;top:738px;font-size:14px;letter-spacing:0.45px;color:#333">单元格编辑过：示例</div>
<div class="abs" style="left:1740px;top:735px;width:62px;height:26px;background:#fdf3e1;border:1px solid #d8d8d8"></div>
</body>
</html>
